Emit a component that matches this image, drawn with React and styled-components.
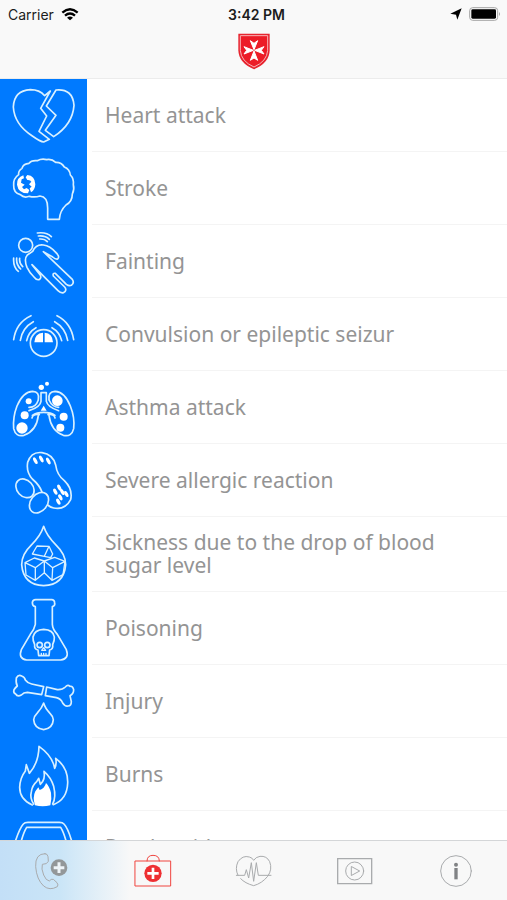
import React from 'react'
import styled, { createGlobalStyle } from 'styled-components'

const GlobalStyle = createGlobalStyle`
      * {
            box-sizing: border-box;
      }
      body {
            margin: 0;
            background: #ffffff;
            font-family: "Noto Sans", "Open Sans", sans-serif;
      }
`

const Screen = styled.div`
      display: flex;
      flex-direction: column;
      height: 100vh;
      overflow: hidden;
`

const Header = styled.header`
      flex: none;
      background: #f9f9f9;
      border-bottom: 1px solid #ececec;
      padding-bottom: 8px;
`

const StatusBar = styled.div`
      display: grid;
      grid-template-columns: 1fr auto 1fr;
      align-items: center;
      height: 28px;
      padding: 0 6px 0 8px;
      font-family: Inter, "Liberation Sans", sans-serif;
      font-size: 14px;
      color: #1c1c1c;
`

const StatusGroup = styled.div`
      display: flex;
      align-items: center;
      gap: 7px;
      justify-content: ${(props) => (props.$end ? 'flex-end' : 'flex-start')};
`

const Clock = styled.span`
      font-weight: 600;
      padding-left: 4px;
`

const Brand = styled.div`
      display: flex;
      justify-content: center;
      padding-top: 5px;
`

const List = styled.ul`
      flex: 1;
      min-height: 0;
      margin: 0;
      padding: 0;
      list-style: none;
      overflow-y: auto;
      scrollbar-width: none;
`

const Row = styled.li`
      display: flex;
`

const RowLink = styled.a`
      flex: 1;
      display: flex;
      min-height: 73px;
      color: #949494;
      text-decoration: none;
`

const IconCell = styled.span`
      flex: none;
      display: flex;
      align-items: center;
      width: 87px;
      background: #007aff;
`

const RowIcon = styled.svg`
      width: 87px;
      height: 73px;
      fill: none;
      stroke: #d8f0ff;
      stroke-width: 5;
      stroke-linejoin: round;
      stroke-linecap: round;

      .solid {
            fill: #ffffff;
            stroke: none;
      }
`

const Label = styled.span`
      flex: 1;
      display: flex;
      align-items: center;
      margin-left: 5px;
      padding: 14px 60px 14px 13px;
      border-bottom: 1px solid #f4f4f4;
      font-size: 21px;
      line-height: 23px;
`

const TabBar = styled.nav`
      flex: none;
      display: flex;
      height: 60px;
      border-top: 1px solid #d4d6d8;
      background: linear-gradient(90deg, #c3dff7 0, #cae5f7 60px, #f8f8f8 130px);
`

const Tab = styled.button`
      flex: 1;
      display: flex;
      align-items: center;
      justify-content: center;
      padding: 0;
      border: none;
      background: none;
      color: ${(props) => (props.$active ? '#f0443f' : '#a9abad')};
      cursor: pointer;
`

const TabIcon = styled.svg`
      width: 40px;
      height: 40px;
      fill: none;
      stroke: currentColor;
      stroke-width: 3;
      stroke-linejoin: round;
      stroke-linecap: round;
`

const conditions = [
  {
    name: 'Heart attack',
    viewBox: '0 3 261 219',
    icon: (
      <>
        <path d="M151 39 L134 53 Q119 35 91 35 Q42 38 40 87 Q43 139 97 174 Q121 191 131 192 L148 184 L117 160 L140 114 L122 91 Z" />
        <path d="M168 36 Q218 31 222 82 Q218 139 161 176 L136 157 L168 112 L139 84 Z" />
      </>
    ),
  },
  {
    name: 'Stroke',
    viewBox: '0 222 261 219',
    icon: (
      <>
        <path d="M143 424 H178 Q180 398 198 381 Q217 371 217 348 Q224 334 220 320 Q222 301 211 291 Q209 273 193 267 Q184 252 167 253 Q155 242 140 245 Q125 241 112 248 Q94 246 87 256 Q70 257 66 271 Q54 279 56 290 Q39 302 41 322 Q40 345 61 350 Q72 361 88 355 Q104 359 120 354 Q143 356 143 390 Z" />
        <path className="solid" d="M70 292 Q50 299 51 320 Q55 346 84 346 L88 336 L80 330 L72 334 L66 327 L74 320 L63 314 L65 304 L72 301 Z" />
        <path className="solid" d="M82 291 Q105 293 106 319 Q105 336 93 343 L89 331 L95 326 L87 319 L94 311 Q91 305 82 306 L77 298 Z" />
      </>
    ),
  },
  {
    name: 'Fainting',
    viewBox: '0 0 261 219',
    icon: (
      <>
        <circle cx="77" cy="61" r="21" />
        <path d="M98 79 Q108 57 130 60 Q151 63 166 81 Q181 94 173 102 Q167 104 158 96 L130 80 L217 163 Q224 174 214 181 Q207 184 199 178 L166 145 Q157 143 160 153 L194 186 Q202 196 191 203 Q182 205 174 197 L96 119 L120 149 Q126 159 117 164 Q109 166 102 156 Q89 144 81 127 Q71 102 82 90 Z" />
        <path d="M112 24 Q139 20 154 35 M115 33 Q136 31 148 43 M119 42 Q134 41 142 50 M41 99 Q39 126 55 139 M50 99 Q48 119 62 132 M59 100 Q57 114 68 125" />
      </>
    ),
  },
  {
    name: 'Convulsion or epileptic seizur',
    viewBox: '0 219 261 219',
    icon: (
      <>
        <circle cx="131" cy="354" r="40" />
        <path d="M41 344 Q48 293 93 272 M61 346 Q67 308 100 290 M80 347 Q85 321 108 308 M171 272 Q213 293 221 344 M164 290 Q196 308 203 346 M156 308 Q179 321 185 347" />
        <path className="solid" d="M103 352 Q104 325 129 323 V352 Z M134 352 V323 Q158 325 159 352 Z" />
      </>
    ),
  },
  {
    name: 'Asthma attack',
    viewBox: '0 -3 261 219',
    icon: (
      <>
        <path d="M123 62 V88 Q121 105 87 116 M139 62 V88 Q143 105 176 116 M123 62 H139 M115 82 Q119 59 98 58 Q69 59 51 102 Q38 136 41 170 Q47 196 72 190 Q110 176 115 130 M147 82 Q144 59 165 58 Q194 59 211 102 Q225 137 221 170 Q215 196 190 190 Q153 176 147 130" />
        <path d="M87 106 Q107 107 115 84 M176 106 Q157 106 147 84 M96 138 Q99 125 118 128 M165 138 Q162 125 144 128 M97 130 Q110 121 131 121 Q153 121 165 130" />
        <g className="solid">
          <circle cx="141" cy="35" r="6" />
          <circle cx="124" cy="46" r="8" />
          <circle cx="86" cy="88" r="9" />
          <circle cx="172" cy="86" r="16" />
          <circle cx="74" cy="130" r="12" />
          <circle cx="66" cy="168" r="17" />
          <circle cx="191" cy="134" r="12" />
          <circle cx="181" cy="167" r="12" />
          <path d="M131 101 L140 116 H122 Z" />
        </g>
      </>
    ),
  },
  {
    name: 'Severe allergic reaction',
    viewBox: '0 216 261 219',
    icon: (
      <>
        <path d="M126 360 Q119 340 97 321 Q78 300 83 271 Q94 238 126 242 Q159 247 167 279 Q171 309 193 326 Q219 351 212 383 Q195 415 161 408 Q151 406 143 399" />
        <ellipse cx="75" cy="349" rx="24" ry="31" transform="rotate(-42 75 349)" />
        <ellipse cx="117" cy="392" rx="25" ry="34" transform="rotate(38 117 392)" />
        <g className="solid">
          <ellipse cx="106" cy="266" rx="5" ry="11" transform="rotate(-28 106 266)" />
          <ellipse cx="124" cy="261" rx="5" ry="11" transform="rotate(-28 124 261)" />
          <ellipse cx="145" cy="267" rx="5" ry="11" transform="rotate(-28 145 267)" />
          <ellipse cx="178" cy="347" rx="5" ry="10" transform="rotate(-28 178 347)" />
          <ellipse cx="166" cy="359" rx="5" ry="10" transform="rotate(-28 166 359)" />
          <ellipse cx="187" cy="360" rx="5" ry="10" transform="rotate(-28 187 360)" />
          <ellipse cx="181" cy="376" rx="5" ry="10" transform="rotate(-28 181 376)" />
          <ellipse cx="199" cy="366" rx="5" ry="10" transform="rotate(-28 199 366)" />
          <ellipse cx="175" cy="389" rx="5" ry="10" transform="rotate(-28 175 389)" />
        </g>
      </>
    ),
  },
  {
    name: 'Sickness due to the drop of blood sugar level',
    viewBox: '0 0 261 219',
    icon: (
      <>
        <path d="M131 25 Q122 54 93 82 Q65 109 65 140 Q70 201 131 203 Q192 201 197 140 Q197 109 169 82 Q140 54 131 25 Z" />
        <path
          strokeWidth="4"
          d="M111 84 L147 85 L133 115 L97 108 Z M147 85 L158 108 L152 119 L133 115 M75 134 L103 120 L133 129 L106 149 Z M75 134 L78 171 L106 187 V149 M106 187 L133 164 V129 M133 129 L164 118 L195 130 L158 149 Z M158 149 L156 187 L133 164 M156 187 L189 170 L195 130"
        />
      </>
    ),
  },
  {
    name: 'Poisoning',
    viewBox: '0 220 261 219',
    icon: (
      <>
        <path d="M106 264 V317 Q103 332 91 347 L64 393 Q54 420 80 424 H182 Q209 420 199 393 L172 347 Q158 332 157 317 V264 Q166 262 164 252 Q163 243 155 243 H107 Q98 243 97 252 Q97 262 106 264 Z" />
        <path d="M114 394 Q102 392 104 378 Q98 365 99 355 Q103 333 131 332 Q160 333 163 355 Q164 365 158 378 Q160 392 149 394 L147 411 H116 Z" />
        <circle cx="119" cy="379" r="8" />
        <circle cx="142" cy="379" r="8" />
        <path strokeWidth="4" d="M131 387 L125 395 H137 Z M124 404 V410 M131 404 V410 M138 404 V410" />
      </>
    ),
  },
  {
    name: 'Injury',
    viewBox: '0 3 261 219',
    icon: (
      <>
        <path d="M131 68 L125 92 Q101 88 82 85 Q71 85 64 93 Q52 99 47 90 Q39 86 42 77 Q46 71 52 66 Q47 58 49 42 Q55 31 65 36 Q74 39 76 48 Q82 57 95 60 Z" />
        <path d="M140 69 L136 95 L169 101 Q183 104 188 117 Q195 128 204 126 Q214 125 214 113 L210 95 Q221 89 221 77 Q218 65 210 67 Q203 61 196 69 Q187 78 172 77 Z" />
        <path d="M131 117 Q126 132 111 148 Q101 158 101 167 Q103 194 131 197 Q158 194 160 167 Q160 158 150 148 Q135 132 131 117 Z" />
      </>
    ),
  },
  {
    name: 'Burns',
    viewBox: '0 222 261 219',
    icon: (
      <>
        <path d="M97 423 Q59 407 59 370 Q60 342 76 321 L79 302 L88 328 Q116 297 117 247 Q158 276 164 313 Q171 299 167 283 Q205 311 203 358 Q201 407 160 422" />
        <path d="M101 420 Q89 401 94 383 Q97 364 110 353 L116 343 L121 361 Q137 347 132 322 Q153 340 161 367 Q169 399 158 420" />
        <path className="solid" d="M105 424 Q97 400 106 382 L115 370 L119 378 Q134 373 138 357 Q148 367 153 386 Q156 407 151 424 Q128 430 105 424 Z" />
      </>
    ),
  },
  {
    name: 'Road accident',
    viewBox: '0 33 261 219',
    icon: (
      <path d="M44 130 Q58 86 70 72 Q74 67 84 67 H178 Q188 67 192 72 Q205 86 217 130 M62 130 Q70 98 80 82 H182 Q192 98 200 130 M44 130 L30 160 V220 H231 V160 L217 130 Z" />
    ),
  },
]

const tabs = [
  {
    name: 'Emergency call',
    viewBox: '92 152 120 120',
    icon: (
      <>
        <path d="M134 160 Q104 160 106 199 Q109 238 130 257 Q148 272 171 259 Q175 254 170 247 L159 237 Q152 235 147 242 Q137 241 130 224 Q122 205 126 192 Q141 192 144 183 L143 169 Q142 160 134 160 Z" />
        <circle cx="176" cy="202" r="25" fill="#939799" stroke="none" />
        <path stroke="#eef4f8" strokeWidth="9" strokeLinecap="butt" d="M176 186 V218 M160 202 H192" />
      </>
    ),
  },
  {
    name: 'First aid',
    active: true,
    viewBox: '396 152 120 120',
    icon: (
      <>
        <path d="M406 182 H512 V257 H406 Z M441 182 Q441 165 459 165 Q478 165 478 182" />
        <circle cx="459" cy="219" r="26" fill="#ee2f32" stroke="none" />
        <path stroke="#ffffff" strokeWidth="8" strokeLinecap="butt" d="M459 202 V236 M442 219 H476" />
      </>
    ),
  },
  {
    name: 'Health',
    viewBox: '702 152 120 120',
    icon: (
      <>
        <path d="M714 225 Q704 205 714 184 Q728 164 748 170 Q757 172 761 180 Q767 170 780 168 Q800 166 809 184 Q818 207 803 228 Q786 249 761 256 Q735 249 722 235" />
        <path d="M709 225 H734 L739 208 L746 233 L754 187 L761 243 L769 187 L775 225 H813" />
      </>
    ),
  },
  {
    name: 'Videos',
    viewBox: '254 152 120 120',
    icon: (
      <>
        <path d="M262 175 H364 V250 H262 Z" strokeWidth="4" strokeLinejoin="miter" />
        <circle cx="313" cy="212" r="27" />
        <path d="M304 199 L328 212 L304 225 Z" />
      </>
    ),
  },
  {
    name: 'Information',
    viewBox: '557 152 120 120',
    icon: (
      <>
        <circle cx="617" cy="212" r="46" />
        <circle cx="617" cy="193" r="6" fill="#808284" stroke="none" />
        <path stroke="#808284" strokeWidth="10" strokeLinecap="butt" d="M617 203 V237" />
      </>
    ),
  },
]

const Wifi = () => (
  <svg width="18" height="13" viewBox="0 0 54 39" fill="none" stroke="#000" strokeWidth="7">
    <path d="M4 14 Q27 -6 50 14" />
    <path d="M12 23 Q27 10 42 23" />
    <path d="M27 37 L18 29 Q27 22 36 29 Z" fill="#000" stroke="none" />
  </svg>
)

const Location = () => (
  <svg width="12" height="12" viewBox="0 0 36 36">
    <path d="M35 1 L22 35 L18 20 L1 17 Z" fill="#000" />
  </svg>
)

const Battery = () => (
  <svg width="32" height="14" viewBox="0 0 96 42">
    <rect x="2" y="2" width="84" height="38" rx="9" fill="#f9f9f9" stroke="#a5a5a5" strokeWidth="3" />
    <rect x="7" y="7" width="74" height="28" rx="4" fill="#000" />
    <path d="M90 15 Q96 21 90 27 Z" fill="#a5a5a5" />
  </svg>
)

const Shield = () => (
  <svg width="32" height="37" viewBox="0 0 96 111">
    <path d="M1 2 H95 V52 Q94 90 48 109 Q2 90 1 52 Z" fill="#e7242f" />
    <path d="M7 8 H89 V52 Q87 85 48 102 Q9 85 7 52 Z" fill="#ec1c27" stroke="#f7b4b6" strokeWidth="3" />
    <path
      d="M48 50 L37 23 L48 31 L59 23 Z M48 54 L37 82 L48 75 L59 82 Z M46 52 L18 41 L26 52 L18 63 Z M50 52 L78 41 L70 52 L78 63 Z"
      fill="#ffffff"
      stroke="#ffffff"
      strokeWidth="3"
    />
  </svg>
)

const App = () => {
  return (
    <Screen>
      <GlobalStyle />
      <Header>
        <StatusBar>
          <StatusGroup>
            <span>Carrier</span>
            <Wifi />
          </StatusGroup>
          <Clock>3:42 PM</Clock>
          <StatusGroup $end>
            <Location />
            <Battery />
          </StatusGroup>
        </StatusBar>
        <Brand>
          <Shield />
        </Brand>
      </Header>
      <List>
        {conditions.map((item) => (
          <Row key={item.name}>
            <RowLink href="#">
              <IconCell>
                <RowIcon viewBox={item.viewBox} aria-hidden="true">{item.icon}</RowIcon>
              </IconCell>
              <Label>{item.name}</Label>
            </RowLink>
          </Row>
        ))}
      </List>
      <TabBar>
        {tabs.map((tab) => (
          <Tab key={tab.name} type="button" aria-label={tab.name} $active={tab.active}>
            <TabIcon viewBox={tab.viewBox} aria-hidden="true">{tab.icon}</TabIcon>
          </Tab>
        ))}
      </TabBar>
    </Screen>
  )
}

export default App
